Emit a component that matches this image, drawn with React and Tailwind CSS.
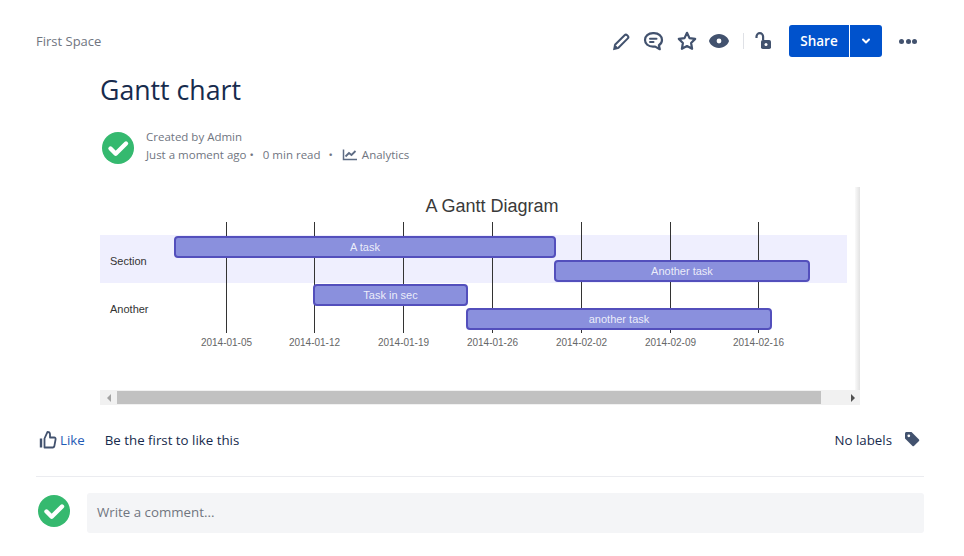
const ticks = [
  { x: 126.5, label: '2014-01-05' },
  { x: 214.5, label: '2014-01-12' },
  { x: 303.5, label: '2014-01-19' },
  { x: 392.5, label: '2014-01-26' },
  { x: 481.5, label: '2014-02-02' },
  { x: 570.5, label: '2014-02-09' },
  { x: 658.5, label: '2014-02-16' },
]

const tasks = [
  { x: 75, y: 50, w: 380, label: 'A task' },
  { x: 455, y: 74, w: 254, label: 'Another task' },
  { x: 214, y: 98, w: 153, label: 'Task in sec' },
  { x: 367, y: 122, w: 304, label: 'another task' },
]

function CheckAvatar() {
  return (
    <svg width="32" height="32" viewBox="0 0 32 32" className="shrink-0">
      <circle cx="16" cy="16" r="16" fill="#35b96f" />
      <path d="M8.5 16.5l5.2 5.2L24 11.5" fill="none" stroke="#fff" strokeWidth="4.4" strokeLinecap="round" strokeLinejoin="round" />
    </svg>
  )
}

function Toolbar() {
  return (
    <div className="flex items-center text-[#42526e]">
      <svg width="24" height="24" viewBox="0 0 24 24" className="mr-[8px]">
        <path d="M6 15.800L15.600 6.200a1.800 1.800 0 0 1 2.500 0l.7.700a1.800 1.800 0 0 1 0 2.500L9.200 19" fill="none" stroke="currentColor" strokeWidth="2" />
        <path d="M5.200 14.800l5 5-6.200 1.400z" fill="currentColor" />
      </svg>
      <svg width="24" height="24" viewBox="0 0 24 24" className="mr-[10px]">
        <path d="M12 4.200c-4.700 0-8 2.900-8 6.800 0 3.800 3.300 6.600 8 6.600h2.200l4.600 2.600-.9-3.900c1.900-1.200 3.100-3.100 3.100-5.300 0-3.900-3.300-6.800-8-6.800z" fill="none" stroke="currentColor" strokeWidth="2.200" strokeLinejoin="round" />
        <rect x="8" y="8.800" width="8.500" height="2" rx="1" fill="currentColor" />
        <rect x="8" y="12" width="5.500" height="2" rx="1" fill="currentColor" />
      </svg>
      <svg width="24" height="24" viewBox="0 0 24 24" className="mr-[8px]">
        <path d="M12 3.800l2.500 5.300 5.700.8-4.100 4.100 1 5.800-5.100-2.800-5.100 2.800 1-5.800-4.100-4.100 5.700-.8z" fill="none" stroke="currentColor" strokeWidth="2.200" strokeLinejoin="round" />
      </svg>
      <svg width="24" height="24" viewBox="0 0 24 24" className="mr-[12px]">
        <path fillRule="evenodd" d="M12 5c5.500 0 9.500 4.200 10 7-.5 2.800-4.500 7-10 7S2.500 14.800 2 12C2.500 9.200 6.500 5 12 5zm0 4.600a2.400 2.400 0 1 0 0 4.800 2.400 2.400 0 0 0 0-4.800z" fill="currentColor" />
      </svg>
      <div className="w-px h-[16px] bg-[#dfe1e6] mr-[8px]" />
      <svg width="24" height="24" viewBox="0 0 24 24" className="mr-[13px]">
        <path d="M4.500 9V7.500a3.300 3.300 0 0 1 6.600 0V11" fill="none" stroke="currentColor" strokeWidth="2.200" />
        <rect x="9" y="11" width="10" height="9" rx="1.800" fill="currentColor" />
        <circle cx="14" cy="15.500" r="1.500" fill="#fff" />
      </svg>
      <div className="flex h-[32px] text-white">
        <div className="w-[60px] bg-[#0052cc] rounded-l-[3px] flex items-center justify-center text-[13.500px] font-semibold">Share</div>
        <div className="w-[32px] ml-px bg-[#0052cc] rounded-r-[3px] flex items-center justify-center">
          <svg width="10" height="10" viewBox="0 0 10 10">
            <path d="M2 3.500L5 6.500 8 3.500" fill="none" stroke="#fff" strokeWidth="2" strokeLinecap="round" strokeLinejoin="round" />
          </svg>
        </div>
      </div>
      <div className="flex gap-[1.500px] ml-[17px] mr-[7px]">
        <span className="w-[5px] h-[5px] rounded-full bg-[#42526e]" />
        <span className="w-[5px] h-[5px] rounded-full bg-[#42526e]" />
        <span className="w-[5px] h-[5px] rounded-full bg-[#42526e]" />
      </div>
    </div>
  )
}

function GanttChart() {
  return (
    <svg width="755" height="203" viewBox="0 0 755 203" className="block" style={{ fontFamily: '"Liberation Sans", Arial, sans-serif' }}>
      <rect x="0" y="48" width="747" height="48" fill="#efeffe" />
      {ticks.map(t => (
        <g key={t.label}>
          <line x1={t.x} x2={t.x} y1="35" y2="146" stroke="#333" strokeWidth="1" />
          <text x={t.x} y="159" textAnchor="middle" fontSize="10" fill="#666">{t.label}</text>
        </g>
      ))}
      {tasks.map(t => (
        <g key={t.label}>
          <rect x={t.x} y={t.y} width={t.w} height="20" rx="3" fill="#8a90dd" stroke="#534fbc" strokeWidth="2" />
          <text x={t.x + t.w / 2} y={t.y + 14} textAnchor="middle" fontSize="11" fill="#fff" fillOpacity="0.85">{t.label}</text>
        </g>
      ))}
      <text x="392" y="25" textAnchor="middle" fontSize="18" fill="#3a3a3a">A Gantt Diagram</text>
      <text x="10" y="78" fontSize="11" fill="#333">Section</text>
      <text x="10" y="126" fontSize="11" fill="#333">Another</text>
    </svg>
  )
}

function Scrollbar() {
  return (
    <div className="flex items-center h-[15px] bg-[#f1f1f1]">
      <div className="w-[17px] flex justify-center">
        <div className="border-y-[4px] border-r-[4px] border-y-transparent border-r-[#a3a3a3]" />
      </div>
      <div className="w-[704px] h-[13px] bg-[#c1c1c1]" />
      <div className="flex-1 flex justify-end pr-[5px]">
        <div className="border-y-[4px] border-l-[4px] border-y-transparent border-l-[#505050]" />
      </div>
    </div>
  )
}

export default function App() {
  return (
    <div className="w-[964px] h-[556px] overflow-hidden bg-white pl-[36px] pr-[40px] pt-[25px] font-['Open_Sans','Noto_Sans',sans-serif]">
      <div className="flex items-center justify-between h-[32px]">
        <span className="text-[13px] text-[#70757f] mt-px">First Space</span>
        <Toolbar />
      </div>

      <div className="ml-[64px]">
        <h1 className="text-[26.700px] leading-[36px] text-[#172b4d] mt-[15px]">Gantt chart</h1>
        <div className="flex items-start h-[32px] gap-[12px] mt-[24px] ml-[2px]">
          <CheckAvatar />
          <div className="text-[11.500px] leading-[18px] text-[#70757f] -mt-[4px]">
            <div>Created by Admin</div>
            <div className="flex items-center">
              <span>Just a moment ago</span>
              <span className="ml-[3px]">•</span>
              <span className="ml-[9px]">0 min read</span>
              <span className="ml-[8px]">•</span>
              <svg width="16" height="14" viewBox="0 0 16 14" className="ml-[9px]">
                <path d="M1.500 1.500V11.500H15" fill="none" stroke="#5e6c84" strokeWidth="1.500" />
                <path d="M3.500 8.500L7 5 9.500 7 13.500 3" fill="none" stroke="#5e6c84" strokeWidth="1.800" />
              </svg>
              <span className="ml-[4px]">Analytics</span>
            </div>
          </div>
        </div>

        <div className="w-[760px] mt-[23px]">
          <div className="flex">
            <GanttChart />
            <div className="w-[5px] bg-gradient-to-r from-[#fafafa] to-[#e2e2e2]" />
          </div>
          <Scrollbar />
        </div>
      </div>

      <div className="flex items-center justify-between mt-[24px] h-[24px] text-[13.300px] text-[#172b4d]">
        <div className="flex items-center">
          <svg width="20" height="20" viewBox="0 0 20 20" className="ml-[2px] -mt-[2px]">
            <path d="M6.500 8.500L9.500 1.800c1.500 0 2.500 1 2.500 2.500V7.500h4.200c1 0 1.600.8 1.400 1.800l-1.300 7c-.2.800-.8 1.200-1.500 1.200H6.500z" fill="none" stroke="#42526e" strokeWidth="1.800" strokeLinejoin="round" />
            <path d="M3 8.500v9" stroke="#42526e" strokeWidth="2.400" />
          </svg>
          <span className="ml-[2px] text-[#1f5bb5]">Like</span>
          <span className="ml-[20px]">Be the first to like this</span>
        </div>
        <div className="flex items-center mr-[4px]">
          <span>No labels</span>
          <svg width="16" height="16" viewBox="0 0 16 16" className="ml-[12px] -mt-[4px]">
            <path d="M1 2.500C1 1.700 1.700 1 2.500 1H7.500L15 8.500a1 1 0 0 1 0 1.400L9.900 15a1 1 0 0 1-1.400 0L1 7.500z" fill="#42526e" />
            <circle cx="4.800" cy="4.800" r="1.400" fill="#fff" />
          </svg>
        </div>
      </div>

      <div className="h-px bg-[#ebecf0] mt-[23px]" />

      <div className="flex items-start mt-[16px]">
        <div className="mt-[2px] ml-[2px]">
          <CheckAvatar />
        </div>
        <div className="ml-[17px] flex-1 h-[40px] rounded-[3px] bg-[#f4f5f7] flex items-center px-[10px] text-[13.300px] text-[#70757f]">Write a comment...</div>
      </div>
    </div>
  )
}
